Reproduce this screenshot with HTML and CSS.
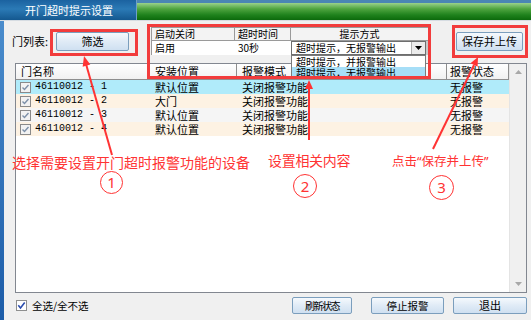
FILE: index.html
```html
<!DOCTYPE html>
<html lang="zh-CN">
<head>
<meta charset="utf-8">
<title>开门超时提示设置</title>
<link rel="stylesheet" href="styles.css">
</head>
<body>
<div class="window">
  <div class="titlebar">
    <div class="tab">开门超时提示设置</div>
    <div class="greenbar"></div>
  </div>
  <div class="body">
    <div class="leftstrip"></div>
    <div class="content">
      <div class="toprow">
        <span class="label">门列表:</span>
        <button class="btn btn-filter">筛选</button>
        <div class="minitable">
          <div class="mt-head">
            <div class="mt-c1">启动关闭</div>
            <div class="mt-c2">超时时间</div>
            <div class="mt-c3">提示方式</div>
          </div>
          <div class="mt-row">
            <div class="mt-c1">启用</div>
            <div class="mt-c2">30秒</div>
            <div class="mt-c3">
              <div class="combo">
                <span class="combo-text">超时提示，无报警输出</span>
                <span class="combo-btn"><svg width="7" height="4" viewBox="0 0 7 4"><polygon points="0,0 7,0 3.5,4" fill="#000"/></svg></span>
              </div>
            </div>
          </div>
        </div>
        <button class="btn btn-save">保存并上传</button>
      </div>

      <div class="list">
        <div class="list-main">
          <div class="lh">
            <div class="c1">门名称</div>
            <div class="c2">安装位置</div>
            <div class="c3">报警模式</div>
            <div class="c4">报警状态</div>
          </div>
          <div class="row r-sel">
            <div class="c1"><svg class="cb" width="11" height="11" viewBox="0 0 11 11"><rect x="0.5" y="0.5" width="10" height="10" fill="#f2f2f2" stroke="#8a8a8a"/><path d="M2.5 5.5 L4.5 7.5 L8.5 3" stroke="#7d90a8" stroke-width="1.4" fill="none"/></svg><span class="num">46110012 - 1</span></div>
            <div class="c2">默认位置</div>
            <div class="c3">关闭报警功能</div>
            <div class="c4">无报警</div>
          </div>
          <div class="row r-alt">
            <div class="c1"><svg class="cb" width="11" height="11" viewBox="0 0 11 11"><rect x="0.5" y="0.5" width="10" height="10" fill="#f2f2f2" stroke="#8a8a8a"/><path d="M2.5 5.5 L4.5 7.5 L8.5 3" stroke="#7d90a8" stroke-width="1.4" fill="none"/></svg><span class="num">46110012 - 2</span></div>
            <div class="c2">大门</div>
            <div class="c3">关闭报警功能</div>
            <div class="c4">无报警</div>
          </div>
          <div class="row r-gray">
            <div class="c1"><svg class="cb" width="11" height="11" viewBox="0 0 11 11"><rect x="0.5" y="0.5" width="10" height="10" fill="#f2f2f2" stroke="#8a8a8a"/><path d="M2.5 5.5 L4.5 7.5 L8.5 3" stroke="#7d90a8" stroke-width="1.4" fill="none"/></svg><span class="num">46110012 - 3</span></div>
            <div class="c2">默认位置</div>
            <div class="c3">关闭报警功能</div>
            <div class="c4">无报警</div>
          </div>
          <div class="row r-alt">
            <div class="c1"><svg class="cb" width="11" height="11" viewBox="0 0 11 11"><rect x="0.5" y="0.5" width="10" height="10" fill="#f2f2f2" stroke="#8a8a8a"/><path d="M2.5 5.5 L4.5 7.5 L8.5 3" stroke="#7d90a8" stroke-width="1.4" fill="none"/></svg><span class="num">46110012 - 4</span></div>
            <div class="c2">默认位置</div>
            <div class="c3">关闭报警功能</div>
            <div class="c4">无报警</div>
          </div>
        </div>
        <div class="scrollbar">
          <svg width="7" height="4" viewBox="0 0 7 4"><polygon points="0,4 7,4 3.5,0" fill="#a8a8a8"/></svg>
          <svg width="7" height="4" viewBox="0 0 7 4"><polygon points="0,0 7,0 3.5,4" fill="#a8a8a8"/></svg>
        </div>
      </div>

      <div class="bottomrow">
        <label class="chk-all"><svg width="11" height="11" viewBox="0 0 11 11"><rect x="0.5" y="0.5" width="10" height="10" fill="#fff" stroke="#8e8f8f"/><path d="M2.3 5.3 L4.5 8 L8.7 2.5" stroke="#2a4cae" stroke-width="1.6" fill="none"/></svg><span>全选/全不选</span></label>
        <button class="btn btn-b b-refresh">刷新状态</button>
        <button class="btn btn-b b-stop">停止报警</button>
        <button class="btn btn-b b-exit">退出</button>
      </div>
    </div>
  </div>

  <div class="dropdown">
    <div class="dd-item">超时提示，并报警输出</div>
    <div class="dd-item dd-sel">超时提示，无报警输出</div>
  </div>

  <div class="redbox rb1"></div>
  <div class="redbox rb2"></div>
  <div class="redbox rb3"></div>

  <svg class="arrows" width="531" height="320" viewBox="0 0 531 320">
    <g stroke="#f33" stroke-width="2" fill="none">
      <line x1="86" y1="64" x2="112" y2="155"/>
      <line x1="309" y1="87" x2="309" y2="140"/>
      <line x1="474" y1="65" x2="433" y2="149"/>
    </g>
    <g fill="#f33">
      <polygon points="84,56 90.3,64.5 82.7,66.7"/>
      <polygon points="309,80 305,89 313,89"/>
      <polygon points="478,57 477.6,66.8 470.5,63.3"/>
    </g>
  </svg>

  <div class="note n1">选择需要设置开门超时报警功能的设备</div>
  <div class="note n2">设置相关内容</div>
  <div class="note n3">点击“保存并上传”</div>

  <div class="circ ci1">1</div>
  <div class="circ ci2">2</div>
  <div class="circ ci3">3</div>
</div>
</body>
</html>
```

FILE: styles.css
```css
* { box-sizing: border-box; margin: 0; padding: 0; }
body {
  margin: 0;
  background: #f0f0f0;
  font-family: "Noto Sans CJK SC", "Noto Sans", sans-serif;
  font-size: 11px;
  color: #000;
}
.window {
  position: relative;
  width: 531px;
  height: 320px;
  overflow: hidden;
  background: #f0f0f0;
}
.titlebar {
  display: flex;
  height: 21px;
  background: #4a86b4;
  border-bottom: 1px solid #d6dce2;
}
.tab {
  width: 137px;
  height: 20px;
  background: linear-gradient(#1b62a0, #2b7ab6 45%, #14588f);
  color: #fff;
  font-size: 11px;
  line-height: 20px;
  padding-left: 25px;
  border-right: 1px solid #6fa0c6;
  white-space: nowrap;
}
.greenbar {
  flex: 1;
  margin-top: 3px;
  height: 17px;
  background: linear-gradient(#9ad28c, #4ea43f 35%, #1f821d 70%, #0c6a0c);
}
.body { display: flex; height: 299px; }
.leftstrip { width: 4px; background: linear-gradient(#4a8ccc, #1c5ca8); }
.content {
  flex: 1;
  display: flex;
  flex-direction: column;
  padding: 6px 4px 0 8px;
}

/* top row */
.toprow { display: flex; align-items: center; height: 28px; }
.label { width: 44px; line-height: 14px; white-space: nowrap; }
.btn {
  font-family: inherit;
  font-size: 11px;
  color: #000;
  background: linear-gradient(#f5f9fd, #e0ebf6 50%, #cfe0f1);
  border: 1px solid #7b9ebd;
  border-radius: 2px;
  height: 19px;
  line-height: 17px;
  padding: 0;
  text-align: center;
  white-space: nowrap;
}
.btn-filter { width: 73px; }
.btn-save { width: 67px; margin-left: 27px; }

.minitable {
  margin-left: 22px;
  width: 278px;
  height: 28px;
  border-top: 1px solid #9a9a9a;
  border-left: 1px solid #9a9a9a;
  font-size: 10px;
  background: #fff;
}
.mt-head, .mt-row { display: flex; }
.mt-head { height: 13px; background: #f3f3f3; line-height: 12px; }
.mt-head > div { border-right: 1px solid #9a9a9a; border-bottom: 1px solid #9a9a9a; }
.mt-row { height: 14px; line-height: 14px; }
.mt-c1 { width: 83px; padding-left: 3px; }
.mt-c2 { width: 56px; padding-left: 3px; }
.mt-c3 { flex: 1; border-right: 3px solid #c8c8c8; }
.mt-head .mt-c3 { text-align: center; }
.combo {
  display: flex;
  height: 14px;
  border: 1px solid #6e6e6e;
  background: #fff;
}
.combo-text { flex: 1; padding-left: 4px; line-height: 12px; white-space: nowrap; }
.combo-btn {
  width: 14px;
  flex: none;
  background: #ececec;
  border-left: 1px solid #b0b0b0;
  display: flex;
  align-items: center;
  justify-content: center;
}

/* list */
.list {
  margin: 8px 0 0 3px;
  height: 230px;
  border: 1px solid #828790;
  background: #fff;
  display: flex;
}
.list-main { flex: 1; }
.lh { display: flex; height: 16px; background: linear-gradient(#fff, #f0f0f0); }
.lh > div {
  border-right: 1px solid #8e8e8e;
  border-bottom: 1px solid #8e8e8e;
  line-height: 15px;
  padding-left: 5px;
  white-space: nowrap;
}
.c1 { width: 134px; }
.c2 { width: 87px; }
.c3 { width: 210px; }
.c4 { width: 62px; }
.lh .c4 { padding-left: 3px; }
.row { display: flex; height: 14px; line-height: 14px; }
.row > div { padding-left: 5px; white-space: nowrap; }
.row .c1 { display: flex; align-items: center; padding-left: 4px; }
.row .c4 { padding-left: 3px; }
.cb { flex: none; margin-right: 4px; }
.num { font-family: "Liberation Mono", monospace; font-size: 10px; }
.r-sel { background: #b0ebfa; }
.r-alt { background: #fdf2e3; }
.r-gray { background: #f5f5f5; }
.scrollbar {
  width: 17px;
  background: #f0f0f0;
  border-left: 1px solid #e4e4e4;
  display: flex;
  flex-direction: column;
  justify-content: space-between;
  align-items: center;
  padding: 6px 0 6px;
}

/* bottom */
.bottomrow { display: flex; align-items: center; margin-top: 4px; height: 17px; }
.chk-all { display: flex; align-items: center; margin-left: 4px; font-size: 10.5px; }
.chk-all svg { margin-right: 5px; }
.btn-b { height: 17px; line-height: 15px; }
.b-refresh { margin-left: auto; width: 60px; font-size: 10px; letter-spacing: -1.5px; }
.b-stop { margin-left: 19px; width: 73px; font-size: 10.5px; }
.b-exit { margin-left: 9px; width: 74px; }

/* overlays */
.dropdown {
  position: absolute;
  left: 291px;
  top: 55px;
  width: 135px;
  height: 23px;
  background: #fff;
  border: 1px solid #7a7a7a;
  font-size: 10px;
  overflow: hidden;
}
.dd-item { height: 11px; line-height: 11px; padding-left: 4px; white-space: nowrap; }
.dd-sel { background: #a6def7; }
.redbox { position: absolute; border: 3px solid #f23c3c; }
.rb1 { left: 50px; top: 29px; width: 88px; height: 27px; }
.rb2 { left: 147px; top: 24px; width: 284px; height: 55px; }
.rb3 { left: 452px; top: 25px; width: 76px; height: 33px; }
.arrows { position: absolute; left: 0; top: 0; }
.note {
  position: absolute;
  color: #f33;
  font-size: 14px;
  line-height: 16px;
  white-space: nowrap;
}
.n1 { left: 12px; top: 154px; }
.n2 { left: 268px; top: 152px; letter-spacing: -0.3px; }
.n3 { left: 392px; top: 154px; font-family: "Noto Sans", "Noto Sans CJK SC", sans-serif; font-size: 12.5px; }
.circ {
  position: absolute;
  border: 1px solid #f33;
  border-radius: 50%;
  color: #f33;
  font-size: 15px;
  text-align: center;
  font-family: "Noto Sans", sans-serif;
}
.ci1 { left: 100px; top: 171px; width: 23px; height: 23px; line-height: 21px; }
.ci2 { left: 293px; top: 174px; width: 24px; height: 24px; line-height: 22px; }
.ci3 { left: 429px; top: 175px; width: 25px; height: 25px; line-height: 23px; }
```
